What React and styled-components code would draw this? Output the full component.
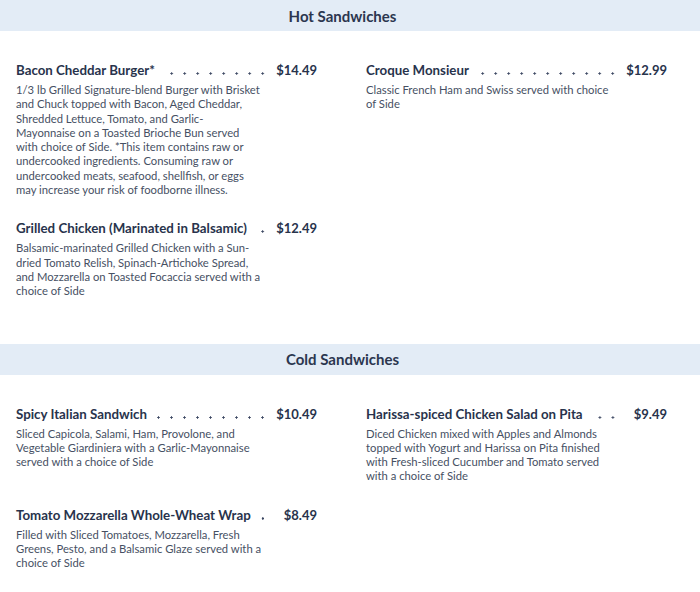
import styled, { createGlobalStyle } from "styled-components";

const menu = [
    {
        title: "Hot Sandwiches",
        items: [
            {
                name: "Bacon Cheddar Burger*",
                price: "$14.49",
                description: "1/3 lb Grilled Signature-blend Burger with Brisket and Chuck topped with Bacon, Aged Cheddar, Shredded Lettuce, Tomato, and Garlic-Mayonnaise on a Toasted Brioche Bun served with choice of Side. *This item contains raw or undercooked ingredients. Consuming raw or undercooked meats, seafood, shellfish, or eggs may increase your risk of foodborne illness."
            },
            {
                name: "Croque Monsieur",
                price: "$12.99",
                description: "Classic French Ham and Swiss served with choice of Side"
            },
            {
                name: "Grilled Chicken (Marinated in Balsamic)",
                price: "$12.49",
                description: "Balsamic-marinated Grilled Chicken with a Sun-dried Tomato Relish, Spinach-Artichoke Spread, and Mozzarella on Toasted Focaccia served with a choice of Side"
            }
        ]
    },
    {
        title: "Cold Sandwiches",
        items: [
            {
                name: "Spicy Italian Sandwich",
                price: "$10.49",
                description: "Sliced Capicola, Salami, Ham, Provolone, and Vegetable Giardiniera with a Garlic-Mayonnaise served with a choice of Side"
            },
            {
                name: "Harissa-spiced Chicken Salad on Pita",
                price: "$9.49",
                description: "Diced Chicken mixed with Apples and Almonds topped with Yogurt and Harissa on Pita finished with Fresh-sliced Cucumber and Tomato served with a choice of Side"
            },
            {
                name: "Tomato Mozzarella Whole-Wheat Wrap",
                price: "$8.49",
                description: "Filled with Sliced Tomatoes, Mozzarella, Fresh Greens, Pesto, and a Balsamic Glaze served with a choice of Side"
            }
        ]
    }
];

export default function App() {
    return (
        <>
            <GlobalStyle />
            <Page>
                {menu.map((section) => (
                    <Section key={section.title}>
                        <SectionHeader>{section.title}</SectionHeader>
                        <ItemGrid>
                            {section.items.map((item) => (
                                <Item key={item.name}>
                                    <NameRow>
                                        <Name>{item.name}</Name>
                                        <Leader />
                                        <Price>{item.price}</Price>
                                    </NameRow>
                                    <Description>{item.description}</Description>
                                </Item>
                            ))}
                        </ItemGrid>
                    </Section>
                ))}
            </Page>
        </>
    );
}

const GlobalStyle = createGlobalStyle`
    * {
        box-sizing: border-box;
    }

    body {
        margin: 0;
        background-color: #FFFFFF;
        font-family: "Lato", "Liberation Sans", sans-serif;
    }
`;

const Page = styled.div`
    width: 700px;
`;

const Section = styled.section`
    padding-bottom: 45px;
`;

const SectionHeader = styled.h2`
    margin: 0;
    height: 31px;
    padding-right: 15px;
    display: flex;
    align-items: center;
    justify-content: center;
    background-color: #E3ECF6;
    color: #2B364F;
    font-size: 15px;
    font-weight: 700;
`;

const ItemGrid = styled.div`
    display: grid;
    grid-template-columns: 301px 301px;
    column-gap: 49px;
    row-gap: 23px;
    padding: 31px 16px 0;
`;

const Item = styled.div`
    display: flex;
    flex-direction: column;
`;

const NameRow = styled.div`
    display: flex;
    align-items: flex-end;
    height: 16px;
`;

const Name = styled.h3`
    margin: 0;
    color: #28334C;
    font-size: 13.3px;
    font-weight: 700;
    line-height: 16px;
    white-space: nowrap;
`;

const Leader = styled.span`
    flex: 1;
    height: 3px;
    margin: 0 0 3px 6px;
    background-image: radial-gradient(circle, #3A4560 0.9px, transparent 1.4px);
    background-size: 13px 3px;
    background-position: right bottom;
    background-repeat: repeat-x;
`;

const Price = styled.span`
    width: 48px;
    text-align: right;
    color: #28334C;
    font-size: 13px;
    font-weight: 700;
    line-height: 16px;
`;

const Description = styled.p`
    margin: 5px 0 0;
    max-width: 246px;
    color: #465063;
    font-size: 11.25px;
    line-height: 14.3px;
`;
